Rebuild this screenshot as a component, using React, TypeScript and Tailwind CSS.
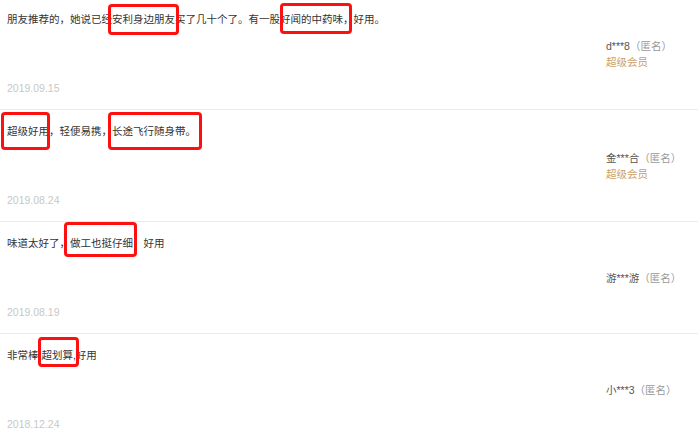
import React from "react";

type Review = {
  text: string;
  date: string;
  user: string;
  vip?: boolean;
  marks: string[];
};

const reviews: Review[] = [
  {
    text: "朋友推荐的，她说已经安利身边朋友买了几十个了。有一股好闻的中药味，好用。",
    date: "2019.09.15",
    user: "d***8",
    vip: true,
    marks: [
      "left-[108px] top-[6px] w-[71px] h-[31px]",
      "left-[280px] top-[5px] w-[72px] h-[31px]",
    ],
  },
  {
    text: "超级好用，轻便易携，长途飞行随身带。",
    date: "2019.08.24",
    user: "金***合",
    vip: true,
    marks: [
      "left-[1px] top-[2px] w-[49px] h-[38px]",
      "left-[108px] top-[2px] w-[94px] h-[38px]",
    ],
  },
  {
    text: "味道太好了，做工也挺仔细，好用",
    date: "2019.08.19",
    user: "游***游",
    marks: ["left-[64px] top-[0px] w-[73px] h-[35px]"],
  },
  {
    text: "非常棒,超划算,好用",
    date: "2018.12.24",
    user: "小***3",
    marks: ["left-[38px] top-[3px] w-[41px] h-[30px]"],
  },
];

function ReviewRow({ review }: { review: Review }) {
  return (
    <div className="relative flex h-[112px] border-b border-[#ebebeb] mr-[2px]">
      <div className="flex-1 pl-[7px] pt-[13px]">
        <p className="text-[10.5px] leading-[16px] text-[#333]">{review.text}</p>
        <p className="mt-[53px] text-[10.5px] leading-[16px] text-[#c8c8c8]">
          {review.date}
        </p>
      </div>

      <div className="w-[92px] flex flex-col justify-center text-[10.5px] leading-[16px]">
        <span className="text-[#555]">
          {review.user}
          <span className="text-[#999]">（匿名）</span>
        </span>
        {review.vip ? <span className="text-[#c9a064]">超级会员</span> : null}
      </div>

      {review.marks.map((m) => (
        <div
          key={m}
          className={"absolute border-[3px] border-[#fd1010] rounded-[4px] " + m}
        />
      ))}
    </div>
  );
}

export default function App() {
  return (
    <div
      className="w-[700px] h-[445px] overflow-hidden bg-white"
      style={{ fontFamily: '"Liberation Sans", "Noto Sans CJK SC", sans-serif' }}
    >
      <div className="-mt-[2px]">
        {reviews.map((r) => (
          <ReviewRow key={r.date} review={r} />
        ))}
      </div>
    </div>
  );
}
